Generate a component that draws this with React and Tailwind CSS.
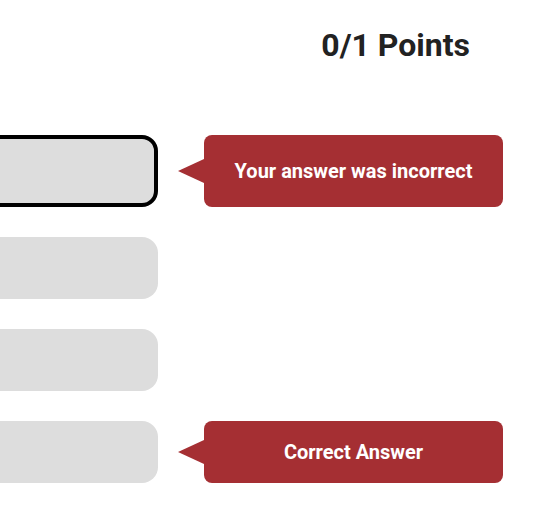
import React from "react";

const answers = [
  { selected: true, note: "Your answer was incorrect" },
  { selected: false },
  { selected: false },
  { selected: false, note: "Correct Answer" },
];

const Tip = ({ text }) => {
  return (
    <div className="flex items-center ml-[20px]">
      <div className="w-0 h-0 border-y-[12px] border-y-transparent border-r-[26px] border-r-[#a52f33]" />
      <div className="w-[299px] self-stretch bg-[#a52f33] rounded-lg flex items-center justify-center text-white text-[20px] font-bold">
        {text}
      </div>
    </div>
  );
};

const App = () => {
  return (
    <div className="w-[544px] h-[527px] bg-white overflow-hidden font-['Roboto','Liberation_Sans',sans-serif]">
      <div className="flex justify-end pr-[74px] pt-[26px]">
        <h2 className="text-[32px] leading-[38px] font-bold text-[#222222]">0/1 Points</h2>
      </div>
      <div className="mt-[71px] flex flex-col gap-[30px]">
        {answers.map((a, i) => (
          <div key={i} className={`flex ${a.selected ? "h-[72px]" : "h-[62px]"}`}>
            <div className="w-[158px] overflow-hidden">
              <div
                className={`-ml-[40px] w-[198px] h-full bg-[#dddddd] rounded-[16px]
                ${a.selected ? "border-4 border-black" : ""}`}
              />
            </div>
            {a.note && <Tip text={a.note} />}
          </div>
        ))}
      </div>
    </div>
  );
};

export default App;
